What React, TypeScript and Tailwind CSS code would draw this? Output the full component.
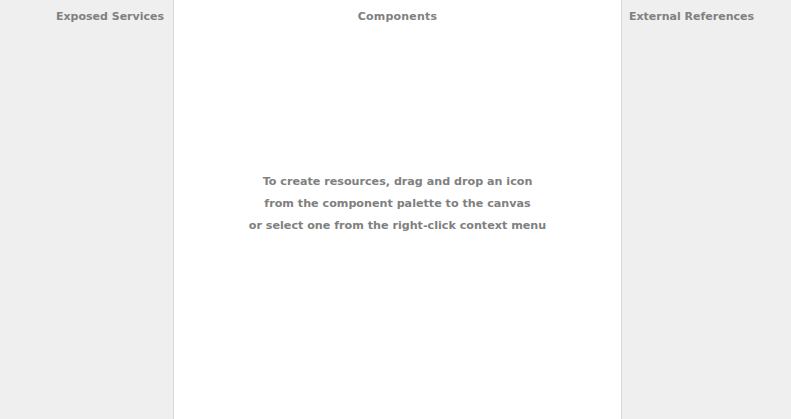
export default function App() {
  const font = { fontFamily: '"DejaVu Sans", "Lucida Grande", sans-serif' };
  return (
    <div className="flex h-[419px] w-[791px] overflow-hidden text-[#808080] font-bold text-[11px]" style={font}>
      <div className="w-[174px] shrink-0 bg-[#efefef] border-r border-[#d8d8d8] pr-[9px] pt-[8px] text-right leading-[18px]">
        Exposed Services
      </div>
      <div className="flex w-[448px] shrink-0 flex-col bg-white border-r border-[#d8d8d8]">
        <div className="pt-[8px] text-center leading-[18px] tracking-[0.2px]">Components</div>
        <div className="mt-[145px] text-center leading-[22px] text-[11.15px]">
          <div>To create resources, drag and drop an icon</div>
          <div>from the component palette to the canvas</div>
          <div>or select one from the right-click context menu</div>
        </div>
      </div>
      <div className="flex-1 bg-[#efefef] pl-[7px] pt-[8px] leading-[18px]">External References</div>
    </div>
  );
}
